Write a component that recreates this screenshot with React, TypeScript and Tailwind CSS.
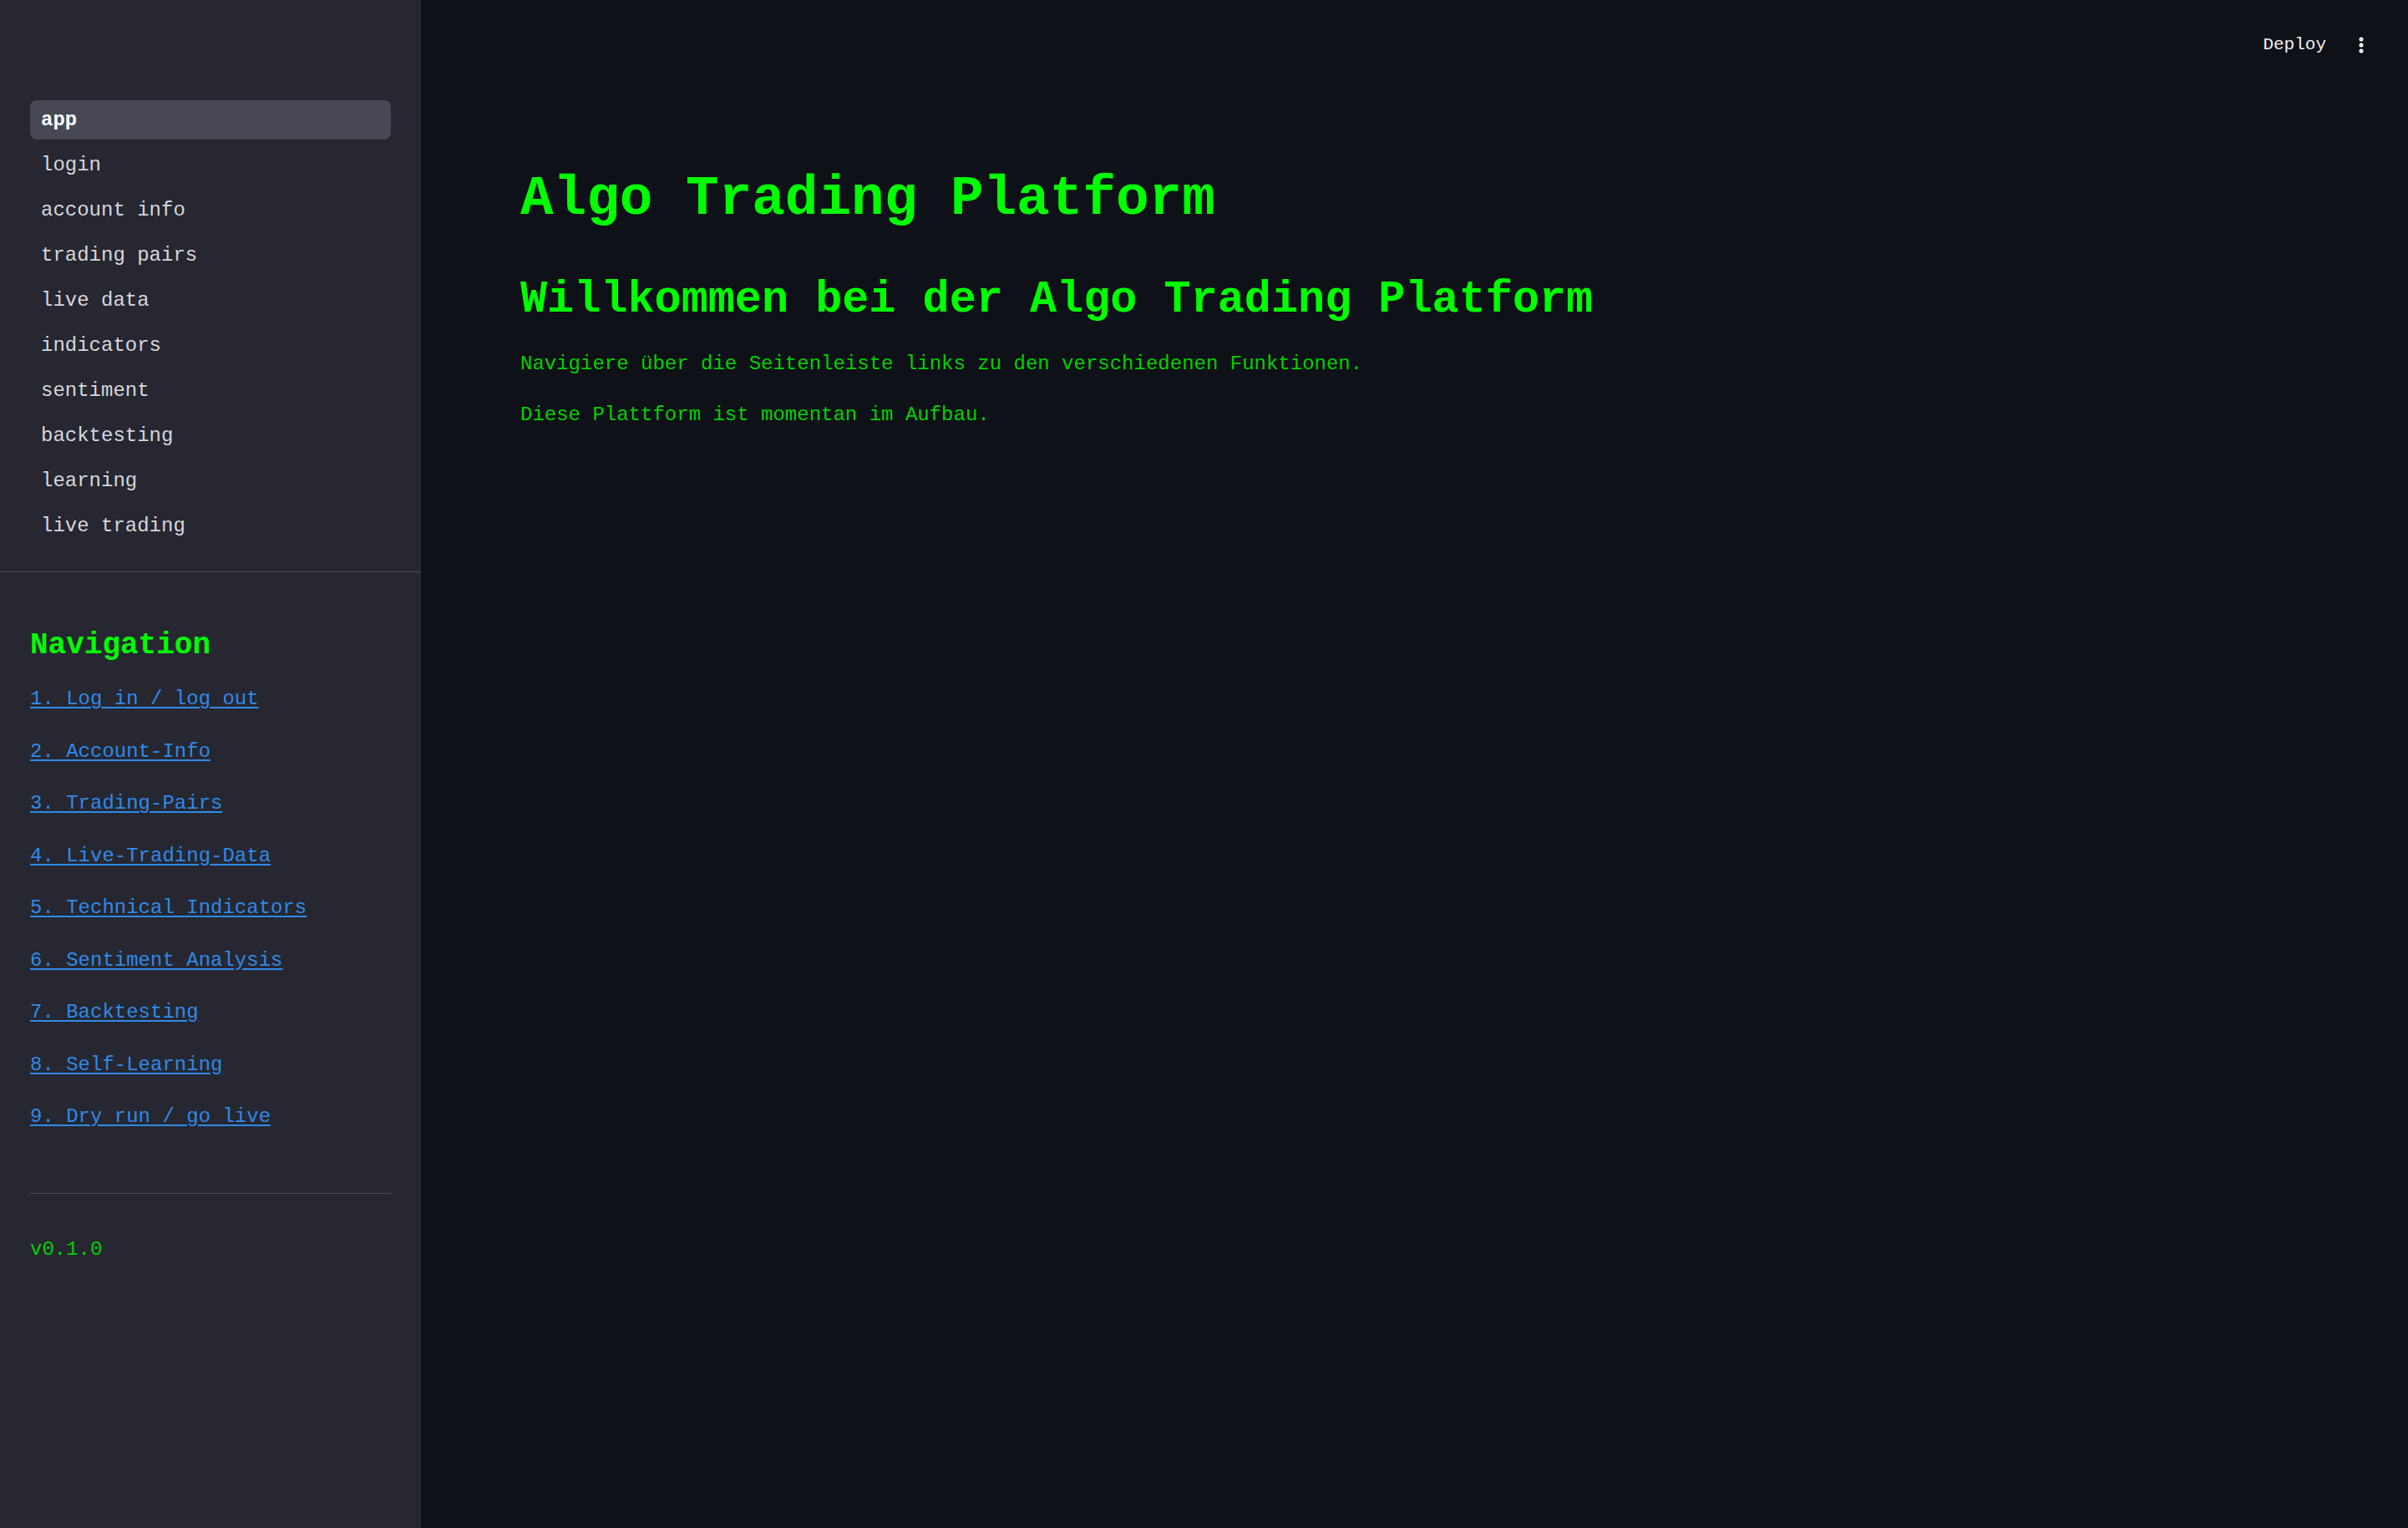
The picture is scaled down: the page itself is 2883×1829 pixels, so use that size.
import { EllipsisVertical } from "lucide-react";

const pages = [
  "app",
  "login",
  "account info",
  "trading pairs",
  "live data",
  "indicators",
  "sentiment",
  "backtesting",
  "learning",
  "live trading",
];

const navLinks = [
  "1. Log in / log out",
  "2. Account-Info",
  "3. Trading-Pairs",
  "4. Live-Trading-Data",
  "5. Technical Indicators",
  "6. Sentiment Analysis",
  "7. Backtesting",
  "8. Self-Learning",
  "9. Dry run / go live",
];

const mono = "font-['Liberation_Mono','Courier_New',monospace]";

const Sidebar = () => {
  return (
    <aside className="w-[504px] shrink-0 bg-[#262730] flex flex-col">
      <nav className="flex flex-col gap-[7px] px-[36px] pt-[120px] pb-[31px]">
        {pages.map((page, i) => (
          <div
            key={page}
            className={`h-[47px] flex items-center px-[13px] rounded-[8px] text-[24px] ${
              i === 0 ? "bg-[#474853] text-white font-bold" : "text-[#d6d6de]"
            }`}
          >
            {page}
          </div>
        ))}
      </nav>
      <div className="h-px w-full bg-[#4b4c56]" />

      <div className="px-[36px] pt-[66px]">
        <h2 className="text-[36px] leading-[43px] font-bold text-[#00ff00]">Navigation</h2>
        <div className="flex flex-col mt-[12px]">
          {navLinks.map((link) => (
            <div key={link} className="h-[62.5px] flex items-center">
              <a href="#" className="text-[24px] text-[#2f8ae8] underline underline-offset-[3px]">
                {link}
              </a>
            </div>
          ))}
        </div>
        <div className="h-px w-full bg-[#4b4c56] mt-[59px]" />
        <p className="text-[24px] leading-[36px] text-[#00d000] mt-[49px]">v0.1.0</p>
      </div>
    </aside>
  );
};

const App = () => {
  return (
    <div className={`flex w-full h-screen bg-[#0e1117] ${mono}`}>
      <Sidebar />
      <main className="flex-1 flex flex-col">
        <header className="h-[107px] flex items-center justify-end pr-[44px] gap-[30px]">
          <span className="text-[21px] text-[#f0f0f5]">Deploy</span>
          <EllipsisVertical className="w-[24px] h-[24px] text-white" strokeWidth={3} />
        </header>
        <div className="pl-[119px] pt-[92px]">
          <h1 className="text-[66px] leading-[79px] font-bold text-[#00ff00]">Algo Trading Platform</h1>
          <h2 className="text-[53.5px] leading-[65px] font-bold text-[#00ff00] mt-[48px]">
            Willkommen bei der Algo Trading Platform
          </h2>
          <p className="text-[24px] leading-[36px] text-[#00d000] mt-[27px]">
            Navigiere über die Seitenleiste links zu den verschiedenen Funktionen.
          </p>
          <p className="text-[24px] leading-[36px] text-[#00d000] mt-[25px]">
            Diese Plattform ist momentan im Aufbau.
          </p>
        </div>
      </main>
    </div>
  );
};

export default App;
